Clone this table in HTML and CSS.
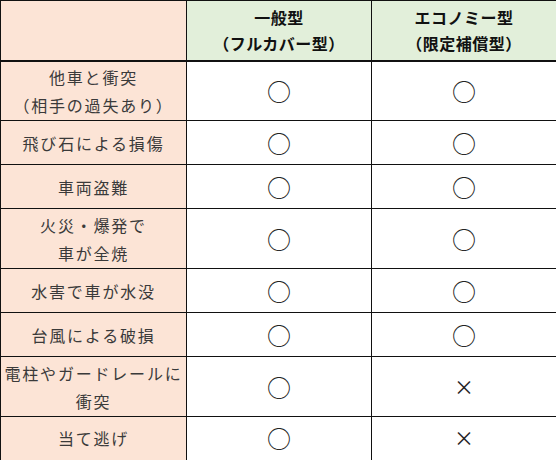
FILE: index.html
```html
<!DOCTYPE html>
<html lang="ja">
<head>
<meta charset="utf-8">
<link rel="stylesheet" href="styles.css">
</head>
<body>
<table class="cmp">
  <thead>
    <tr class="row-head">
      <th class="corner"></th>
      <th class="plan">一般型<br>（フルカバー型）</th>
      <th class="plan">エコノミー型<br>（限定補償型）</th>
    </tr>
  </thead>
  <tbody>
    <tr class="row-2 first">
      <th class="label">他車と衝突<br>（相手の過失あり）</th>
      <td class="mark">○</td>
      <td class="mark">○</td>
    </tr>
    <tr class="row-1">
      <th class="label">飛び石による損傷</th>
      <td class="mark">○</td>
      <td class="mark">○</td>
    </tr>
    <tr class="row-1">
      <th class="label">車両盗難</th>
      <td class="mark">○</td>
      <td class="mark">○</td>
    </tr>
    <tr class="row-2">
      <th class="label">火災・爆発で<br>車が全焼</th>
      <td class="mark">○</td>
      <td class="mark">○</td>
    </tr>
    <tr class="row-1">
      <th class="label">水害で車が水没</th>
      <td class="mark">○</td>
      <td class="mark">○</td>
    </tr>
    <tr class="row-1">
      <th class="label">台風による破損</th>
      <td class="mark">○</td>
      <td class="mark">○</td>
    </tr>
    <tr class="row-2">
      <th class="label">電柱やガードレールに<br>衝突</th>
      <td class="mark">○</td>
      <td class="mark cross">×</td>
    </tr>
    <tr class="row-1 last">
      <th class="label">当て逃げ</th>
      <td class="mark">○</td>
      <td class="mark cross">×</td>
    </tr>
  </tbody>
</table>
</body>
</html>
```

FILE: styles.css
```css
html, body {
  margin: 0;
  padding: 0;
  background: #ffffff;
}

.cmp {
  border-collapse: collapse;
  table-layout: fixed;
  width: 555px;
  font-family: "Noto Sans CJK JP", "Noto Sans", sans-serif;
  color: #333333;
}

.cmp th,
.cmp td {
  border: 1.5px solid #111111;
  padding: 0;
  text-align: center;
  vertical-align: middle;
}

.cmp th.corner { width: 185px; background: #fce4d6; }
.cmp th.plan {
  width: 184px;
  background: #e2efda;
  color: #111111;
  font-weight: 700;
  font-size: 16px;
  line-height: 26px;
  letter-spacing: 0.5px;
}

.row-head { height: 60px; }
.row-2 { height: 60px; }
.row-1 { height: 44px; }

.cmp tr.first th,
.cmp tr.first td { border-top: 2.5px solid #111111; }

.cmp tr.last th,
.cmp tr.last td { border-bottom: 2.5px solid #111111; }

.cmp th:first-child { border-left: 1px solid #111111; }
.cmp th:last-child,
.cmp td:last-child { border-right: 2.5px solid #111111; }

.label {
  background: #fce4d6;
  font-weight: 400;
  font-size: 16px;
  line-height: 28px;
  letter-spacing: 1.8px;
  color: #3a3a3a;
  white-space: nowrap;
}

.mark {
  font-size: 24px;
  line-height: 28px;
  color: #222222;
}

.mark.cross {
  font-size: 20px;
}
```
